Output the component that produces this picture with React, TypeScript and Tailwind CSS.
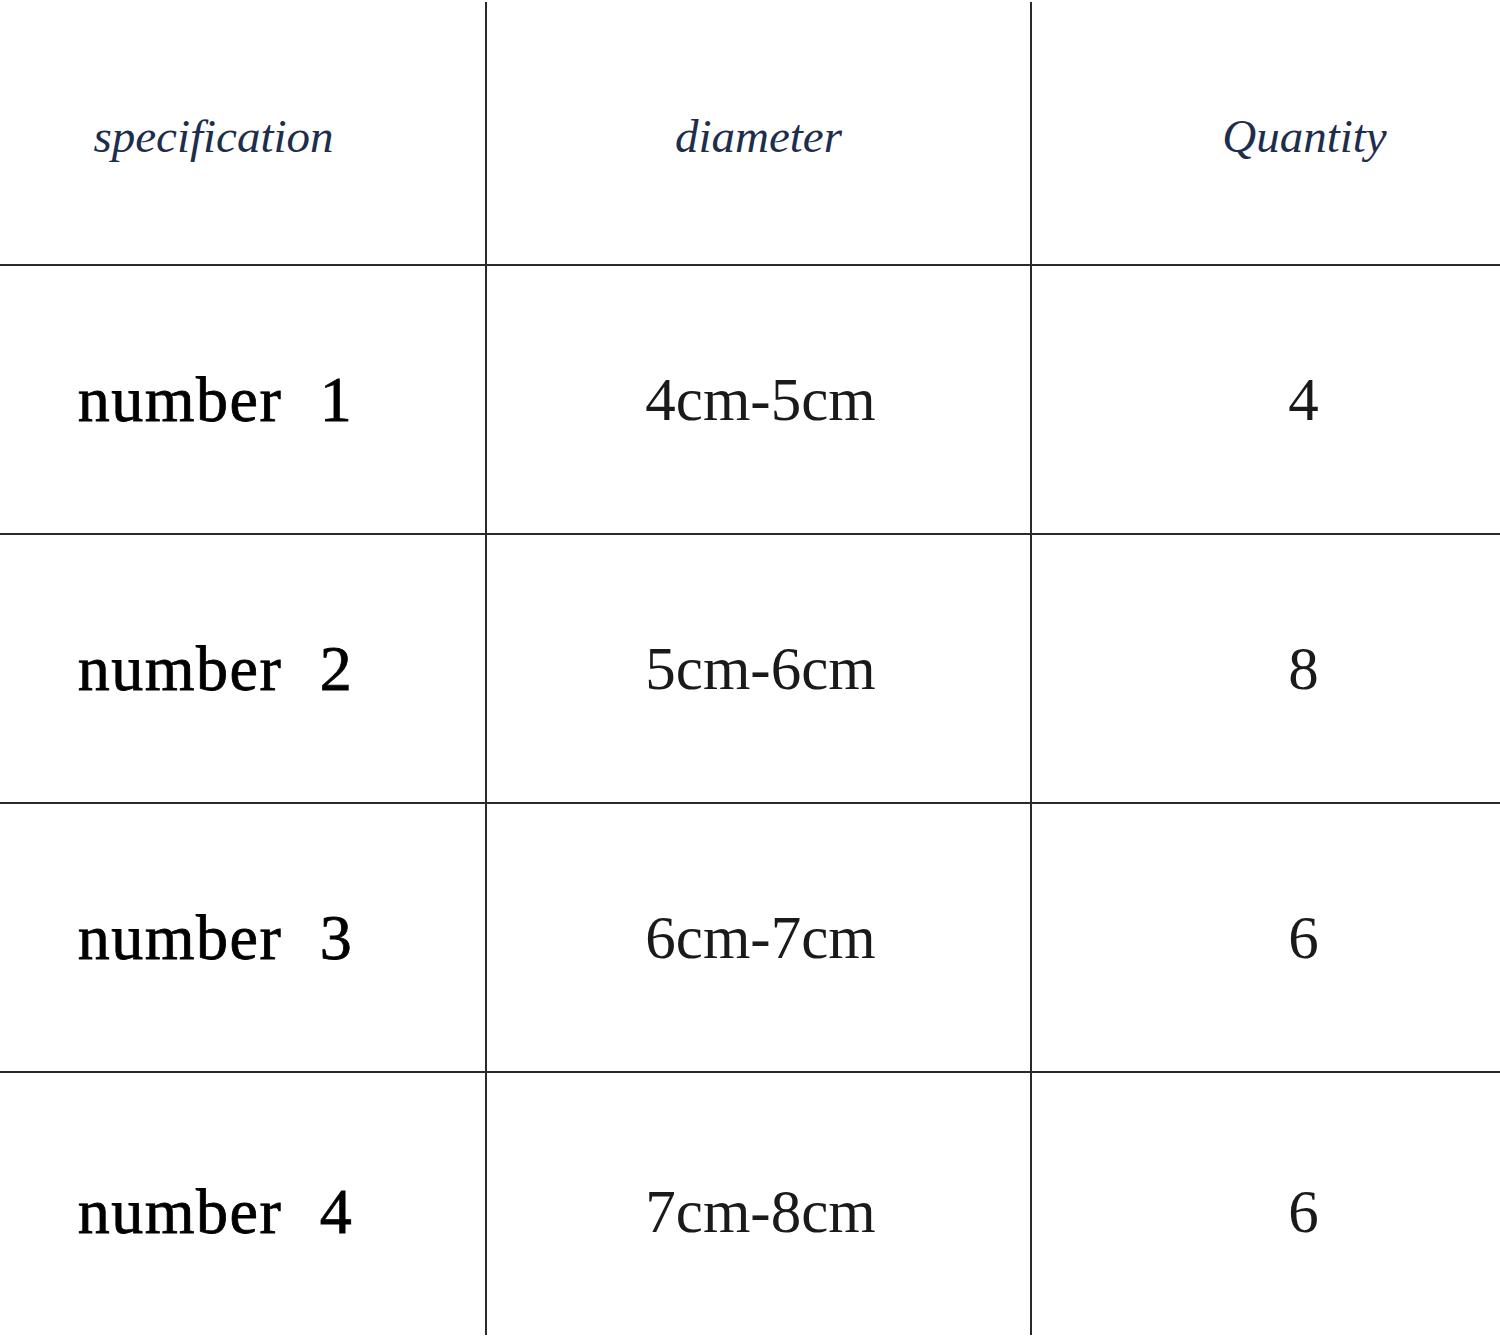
import React from "react";

const headers = ["specification", "diameter", "Quantity"];
const rows = [
  ["number 1", "4cm-5cm", "4"],
  ["number 2", "5cm-6cm", "8"],
  ["number 3", "6cm-7cm", "6"],
  ["number 4", "7cm-8cm", "6"],
];

export default function App() {
  return (
    <div className="w-[1500px] h-[1339px] overflow-hidden bg-white pt-[2px]">
      <div className="ml-[-58px] w-[1635px] flex flex-col">
        <div className="flex h-[264px] border-b-2 border-[#2a2a2a]">
          {headers.map((h, i) => (
            <div
              key={h}
              className={`w-[545px] h-full flex items-center justify-center ${i < 2 ? "border-r-2 border-[#2a2a2a]" : ""}`}
            >
              <span className="font-['Liberation_Serif',serif] italic text-[47px] text-[#1d2e4c] pt-[6px]">
                {h}
              </span>
            </div>
          ))}
        </div>
        {rows.map((r, ri) => {
          const last = ri === 3;
          const pad = last ? "pt-[16px]" : "";
          return (
            <div
              key={ri}
              className={`flex ${last ? "h-[262px]" : "h-[269px] border-b-2 border-[#2a2a2a]"}`}
            >
              <div className={`w-[545px] h-full flex items-center justify-center border-r-2 border-[#2a2a2a] ${pad}`}>
                <span className="font-['Liberation_Serif',serif] text-[64px] text-black tracking-[1.5px] [word-spacing:20px] [-webkit-text-stroke:0.8px_black] pl-[4px]">
                  {r[0]}
                </span>
              </div>
              <div className={`w-[545px] h-full flex items-center justify-center border-r-2 border-[#2a2a2a] ${pad}`}>
                <span className="font-['Liberation_Serif',serif] text-[61px] text-[#1a1a1a] pl-[4px]">
                  {r[1]}
                </span>
              </div>
              <div className={`w-[545px] h-full flex items-center justify-center ${pad}`}>
                <span className="font-['Liberation_Serif',serif] text-[61px] text-[#1a1a1a] pr-[2px]">
                  {r[2]}
                </span>
              </div>
            </div>
          );
        })}
      </div>
    </div>
  );
}
